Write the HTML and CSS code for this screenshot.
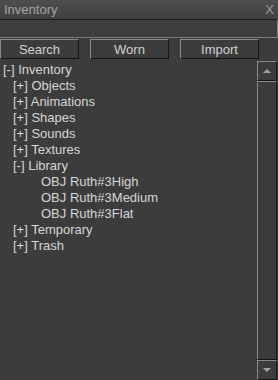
FILE: index.html
```html
<!DOCTYPE html>
<html lang="en">
<head>
    <meta charset="UTF-8">
    <title>Inventory</title>
    <link rel="stylesheet" href="styles.css">
</head>
<body>
    <div class="window">
        <div class="titlebar">
            <span>Inventory</span>
            <span class="close">X</span>
        </div>

        <div class="search-box"></div>

        <div class="tabs">
            <button class="tab">Search</button>
            <button class="tab">Worn</button>
            <button class="tab">Import</button>
        </div>

        <div class="main">
            <ul class="tree">
                <li class="lvl0">[-] Inventory</li>
                <li class="lvl1">[+] Objects</li>
                <li class="lvl1">[+] Animations</li>
                <li class="lvl1">[+] Shapes</li>
                <li class="lvl1">[+] Sounds</li>
                <li class="lvl1">[+] Textures</li>
                <li class="lvl1">[-] Library</li>
                <li class="lvl2">OBJ Ruth#3High</li>
                <li class="lvl2">OBJ Ruth#3Medium</li>
                <li class="lvl2">OBJ Ruth#3Flat</li>
                <li class="lvl1">[+] Temporary</li>
                <li class="lvl1">[+] Trash</li>
            </ul>

            <!-- scrollbar -->
            <div class="scrollbar">
                <div class="scroll-btn"><span class="arrow up"></span></div>
                <div class="scroll-track"></div>
                <div class="scroll-btn"><span class="arrow down"></span></div>
            </div>
        </div>
    </div>
</body>
</html>
```

FILE: styles.css
```css
:root {
    --bg: #3c3c3c;
    --light: #8a8a8a;
    --dark: #151515;
    --text: #d6d6d6;
}

* {
    box-sizing: border-box;
    margin: 0;
    padding: 0;
}

body {
    background: var(--bg);
    font-family: 'Liberation Sans', Arial, sans-serif;
    font-size: 13px;
    color: var(--text);
}

.window {
    width: 278px;
    height: 380px;
    display: flex;
    flex-direction: column;
    overflow: hidden;
}

/* title bar */
.titlebar {
    height: 19px;
    display: flex;
    justify-content: space-between;
    align-items: center;
    padding: 0 4px;
    background: linear-gradient(#4e4e4e, #414141);
    color: #a4a4a4;
}

.close {
    color: #9a9a9a;
}

/* search field */
.search-box {
    height: 19px;
    background: #3e3e3e;
    border-top: 1px solid #1c1c1c;
    border-right: 1px solid #7c7c7c;
    border-bottom: 1px solid #7c7c7c;
}

/* tabs */
.tabs {
    display: flex;
    gap: 11px;
    height: 21px;
    padding-top: 1px;
}

.tab {
    width: 79px;
    height: 20px;
    background: #3c3c3c;
    border: 1px solid;
    border-color: var(--light) var(--dark) var(--dark) var(--light);
    font-family: 'Liberation Sans', Arial, sans-serif;
    font-size: 13px;
    color: #d0d0d0;
}

/* tree + scrollbar */
.main {
    flex: 1;
    display: flex;
    padding-top: 2px;
}

.tree {
    flex: 1;
    list-style: none;
    padding-top: 1px;
}

.tree li {
    height: 16px;
    line-height: 16px;
    white-space: nowrap;
}

.lvl0 { padding-left: 3px; }
.lvl1 { padding-left: 13px; }
.lvl2 { padding-left: 41px; }

.scrollbar {
    width: 20px;
    margin-right: 1px;
    display: flex;
    flex-direction: column;
}

.scroll-btn {
    height: 20px;
    border: 1px solid;
    border-color: var(--light) var(--dark) var(--dark) var(--light);
    display: flex;
    align-items: center;
    justify-content: center;
}

.scroll-track {
    flex: 1;
    border: 1px solid;
    border-color: var(--light) var(--dark) var(--dark) var(--light);
}

.arrow {
    width: 0;
    height: 0;
    border-left: 4px solid transparent;
    border-right: 4px solid transparent;
}

.arrow.up {
    border-bottom: 4px solid #a0a0a0;
}

.arrow.down {
    border-top: 4px solid #a0a0a0;
}
```
